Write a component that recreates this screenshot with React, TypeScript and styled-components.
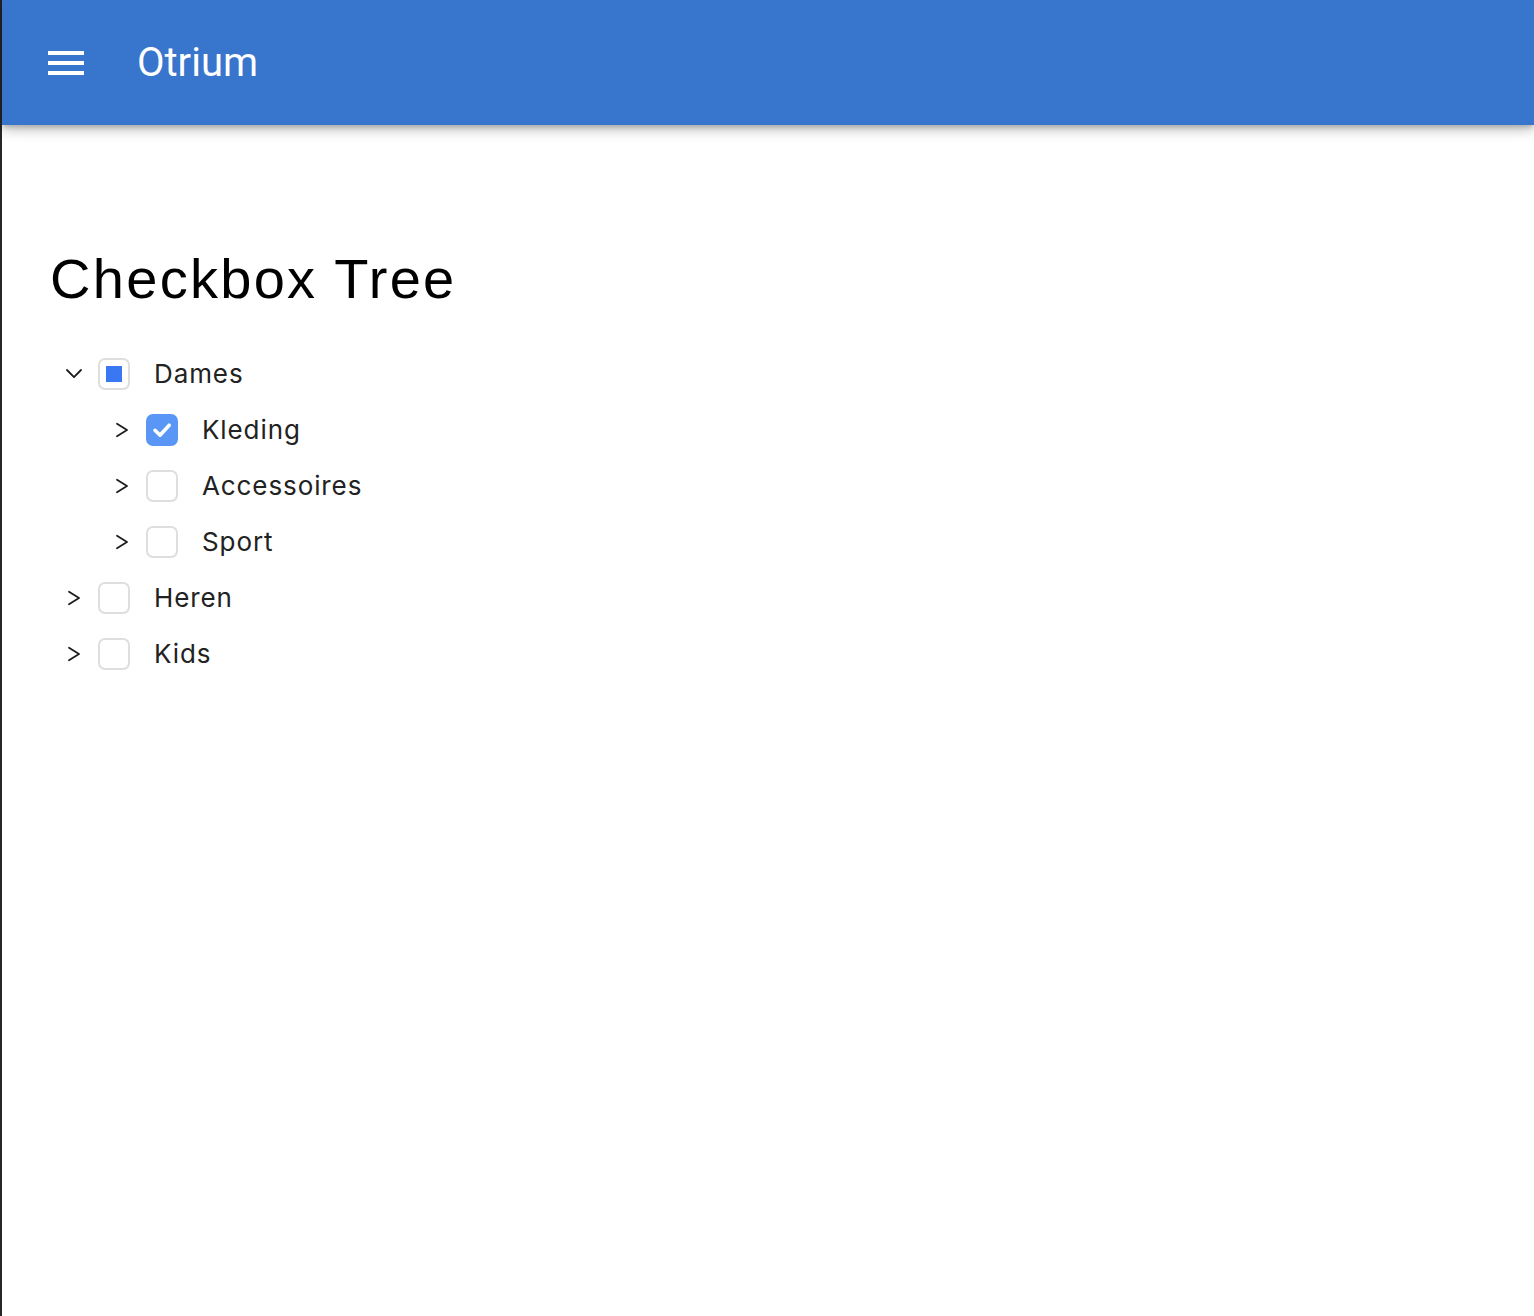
import React, { useState } from "react";
import styled, { createGlobalStyle } from "styled-components";

const GlobalStyle = createGlobalStyle`
  html, body { margin: 0; padding: 0; background: #ffffff; }
  body { font-family: Inter, "Noto Sans", sans-serif; }
  * { box-sizing: border-box; }
`;

const Frame = styled.div`
  min-height: 1316px;
  border-left: 2px solid #262626;
  background: #ffffff;
  display: flex;
  flex-direction: column;
`;

const TopBar = styled.header`
  height: 125px;
  background: #3875cc;
  display: flex;
  align-items: center;
  padding-left: 46px;
  gap: 53px;
  box-shadow: 0 3px 5px -1px rgba(0, 0, 0, 0.2), 0 6px 10px 0 rgba(0, 0, 0, 0.14),
    0 1px 18px 0 rgba(0, 0, 0, 0.12);
  position: relative;
  z-index: 1;
`;

const MenuButton = styled.button`
  border: 0;
  background: transparent;
  padding: 0;
  width: 36px;
  height: 24px;
  display: flex;
  cursor: pointer;
`;

const Brand = styled.span`
  font-family: Roboto, "Noto Sans", sans-serif;
  font-size: 40px;
  line-height: 48px;
  color: #ffffff;
  font-weight: 400;
`;

const Main = styled.main`
  padding: 122px 48px 0 48px;
  display: flex;
  flex-direction: column;
`;

const Title = styled.h1`
  margin: 0;
  font-family: "Liberation Sans", Arial, sans-serif;
  font-weight: 400;
  font-size: 56px;
  line-height: 64px;
  letter-spacing: 2.3px;
  color: #000000;
`;

const Tree = styled.ul`
  list-style: none;
  margin: 35px 0 0 0;
  padding: 0;
  display: flex;
  flex-direction: column;
`;

const Row = styled.li<{ $level: number }>`
  height: 56px;
  display: flex;
  align-items: center;
  padding-left: ${(p) => 8 + p.$level * 48}px;
`;

const Toggle = styled.button`
  width: 32px;
  height: 32px;
  border: 0;
  background: transparent;
  padding: 0;
  display: flex;
  align-items: center;
  justify-content: center;
  color: #1d1d1d;
  cursor: pointer;
`;

const Box = styled.span<{ $state: "checked" | "partial" | "empty" }>`
  width: 32px;
  height: 32px;
  margin-left: 8px;
  border-radius: 7px;
  border: 2px solid ${(p) => (p.$state === "checked" ? "#5a96f5" : "#dedede")};
  background: ${(p) => (p.$state === "checked" ? "#5a96f5" : "#ffffff")};
  display: flex;
  align-items: center;
  justify-content: center;
  flex-shrink: 0;
`;

const PartialMark = styled.span`
  width: 16px;
  height: 16px;
  background: #3a77f3;
`;

const Label = styled.span`
  margin-left: 24px;
  font-family: Inter, "Noto Sans", sans-serif;
  font-size: 26px;
  line-height: 32px;
  letter-spacing: 0.9px;
  color: #222222;
`;

type Node = { label: string; level: number; state: "checked" | "partial" | "empty"; open?: boolean };

const nodes: Node[] = [
  { label: "Dames", level: 0, state: "partial", open: true },
  { label: "Kleding", level: 1, state: "checked" },
  { label: "Accessoires", level: 1, state: "empty" },
  { label: "Sport", level: 1, state: "empty" },
  { label: "Heren", level: 0, state: "empty" },
  { label: "Kids", level: 0, state: "empty" },
];

const ChevronDown = () => (
  <svg width="18" height="12" viewBox="0 0 18 12" fill="none">
    <polyline points="2,2 9,9.2 16,2" stroke="currentColor" strokeWidth="1.8" strokeLinecap="round" strokeLinejoin="round" />
  </svg>
);

const ChevronRight = () => (
  <svg width="14" height="16" viewBox="0 0 14 16" fill="none">
    <polyline points="2,1.8 12,8 2,14.2" stroke="currentColor" strokeWidth="1.8" strokeLinecap="round" strokeLinejoin="round" />
  </svg>
);

const Check = () => (
  <svg width="20" height="16" viewBox="0 0 20 16" fill="none">
    <polyline points="3,8.3 8,13.2 17.2,3.2" stroke="#ffffff" strokeWidth="3.6" strokeLinecap="round" strokeLinejoin="round" />
  </svg>
);

const Hamburger = () => (
  <svg width="36" height="24" viewBox="0 0 36 24">
    <rect x="0" y="0" width="36" height="4" fill="#ffffff" />
    <rect x="0" y="10" width="36" height="4" fill="#ffffff" />
    <rect x="0" y="20" width="36" height="4" fill="#ffffff" />
  </svg>
);

export default function App() {
  const [items] = useState(nodes);
  return (
    <>
      <GlobalStyle />
      <Frame>
        <TopBar>
          <MenuButton aria-label="menu">
            <Hamburger />
          </MenuButton>
          <Brand>Otrium</Brand>
        </TopBar>
        <Main>
          <Title>Checkbox Tree</Title>
          <Tree>
            {items.map((n) => (
              <Row key={n.label} $level={n.level}>
                <Toggle>{n.open ? <ChevronDown /> : <ChevronRight />}</Toggle>
                <Box $state={n.state}>
                  {n.state === "checked" && <Check />}
                  {n.state === "partial" && <PartialMark />}
                </Box>
                <Label>{n.label}</Label>
              </Row>
            ))}
          </Tree>
        </Main>
      </Frame>
    </>
  );
}
